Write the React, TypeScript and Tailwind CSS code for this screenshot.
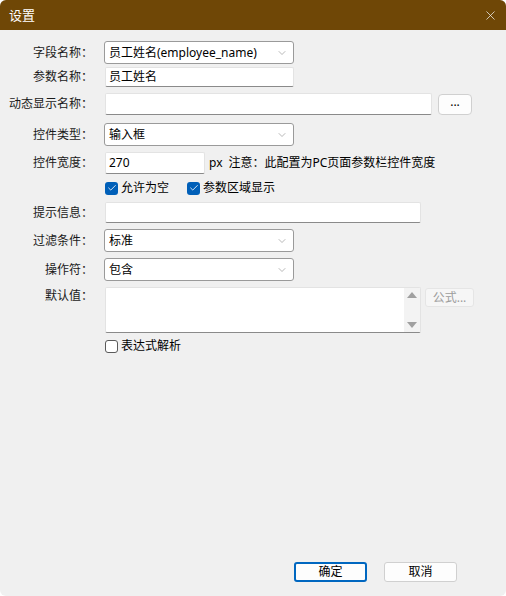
import { Check, ChevronDown, X } from "lucide-react";

const font = {
  fontFamily: '"Segoe UI", "Noto Sans", "Noto Sans CJK SC", sans-serif',
};

function Label({ text, top = false }: { text: string; top?: boolean }) {
  return (
    <div
      className={`w-[93px] shrink-0 text-right text-[12px] leading-[16px] text-[#1a1a1a] ${top ? "self-start pt-[1px]" : ""}`}
    >
      {text}
    </div>
  );
}

function Select({ value }: { value: string }) {
  return (
    <div className="ml-[11px] flex h-[23px] w-[190px] items-center justify-between rounded-[3px] border border-[#9a9a9a] bg-white pl-[4px] pr-[5px] text-[12px] leading-[16px]">
      <span>{value}</span>
      <ChevronDown size={12} strokeWidth={1} className="text-[#707070]" />
    </div>
  );
}

function Input({ value = "", w, h = 22 }: { value?: string; w: number; h?: number }) {
  return (
    <div
      className="ml-[12px] flex items-center rounded-[2px] border border-[#e3e3e3] border-b-[#8a8a8a] bg-white px-[3px] text-[12px] leading-[16px]"
      style={{ width: w, height: h }}
    >
      {value}
    </div>
  );
}

function CheckBox({ checked, label }: { checked: boolean; label: string }) {
  return (
    <div className="flex items-center gap-[3px] text-[12px] leading-[16px]">
      {checked ? (
        <span className="flex h-[13px] w-[13px] items-center justify-center rounded-[3px] bg-[#005fb8]">
          <Check size={10} strokeWidth={2} className="text-white" />
        </span>
      ) : (
        <span className="h-[13px] w-[13px] rounded-[3px] border border-[#5a5a5a] bg-white" />
      )}
      <span>{label}</span>
    </div>
  );
}

export default function App() {
  return (
    <div className="h-[596px] w-[506px] bg-white" style={font}>
      <div className="flex h-full w-full flex-col overflow-hidden rounded-[6px] bg-[#f0f0f0] text-black">
        <div className="flex h-[30px] shrink-0 items-center justify-between bg-[#6f4706] pl-[9px] pr-[8px] text-white">
          <span className="text-[13px] leading-[16px]">设置</span>
          <X size={15} strokeWidth={1.2} className="text-[#f0f0f0]" />
        </div>

        <div className="flex flex-1 flex-col">
          <div className="mt-[11px] flex items-center">
            <Label text="字段名称：" />
            <Select value="员工姓名(employee_name)" />
          </div>

          <div className="mt-[3px] flex items-center">
            <Label text="参数名称：" />
            <Input value="员工姓名" w={189} h={20} />
          </div>

          <div className="mt-[6px] flex items-center">
            <Label text="动态显示名称：" />
            <Input w={327} />
            <button className="ml-[6px] flex h-[21px] w-[34px] items-center justify-center rounded-[4px] border border-[#d0d0d0] bg-[#fdfdfd] pb-[4px] text-[12px] leading-[12px]">
              ...
            </button>
          </div>

          <div className="mt-[8px] flex items-center">
            <Label text="控件类型：" />
            <Select value="输入框" />
          </div>

          <div className="mt-[6px] flex items-center">
            <Label text="控件宽度：" />
            <Input value="270" w={100} />
            <span className="ml-[4px] text-[12px] leading-[16px]">px</span>
            <span className="ml-[6px] text-[12px] leading-[16px]">注意：此配置为PC页面参数栏控件宽度</span>
          </div>

          <div className="mt-[6px] flex h-[16px] items-center gap-[18px] pl-[105px]">
            <CheckBox checked label="允许为空" />
            <CheckBox checked label="参数区域显示" />
          </div>

          <div className="mt-[6px] flex items-center">
            <Label text="提示信息：" />
            <Input w={316} h={21} />
          </div>

          <div className="mt-[6px] flex items-center">
            <Label text="过滤条件：" />
            <Select value="标准" />
          </div>

          <div className="mt-[6px] flex items-center">
            <Label text="操作符：" />
            <Select value="包含" />
          </div>

          <div className="mt-[6px] flex items-start">
            <Label text="默认值：" top />
            <div className="ml-[12px] flex h-[46px] w-[316px] rounded-[2px] border border-[#e3e3e3] border-b-[#8a8a8a] bg-white">
              <div className="flex-1" />
              <div className="flex w-[16px] flex-col items-center justify-between bg-[#f3f3f3] py-[4px]">
                <span className="h-0 w-0 border-x-[5px] border-b-[6px] border-x-transparent border-b-[#a0a0a0]" />
                <span className="h-0 w-0 border-x-[5px] border-t-[6px] border-x-transparent border-t-[#a0a0a0]" />
              </div>
            </div>
            <button className="ml-[4px] mt-[1px] flex h-[19px] w-[49px] items-center justify-center rounded-[3px] border border-[#e5e5e5] bg-[#f6f6f6] text-[12px] leading-[16px] text-[#9d9d9d]">
              公式...
            </button>
          </div>

          <div className="mt-[6px] flex h-[14px] items-center pl-[105px]">
            <CheckBox checked={false} label="表达式解析" />
          </div>

          <div className="flex-1" />

          <div className="mb-[14px] flex gap-[17px] pl-[294px]">
            <button className="flex h-[20px] w-[73px] items-center justify-center rounded-[3px] border-2 border-[#0067c0] bg-[#fdfdfd] text-[12px] leading-[16px]">
              确定
            </button>
            <button className="flex h-[20px] w-[73px] items-center justify-center rounded-[3px] border border-[#d0d0d0] bg-[#fdfdfd] text-[12px] leading-[16px]">
              取消
            </button>
          </div>
        </div>
      </div>
    </div>
  );
}
